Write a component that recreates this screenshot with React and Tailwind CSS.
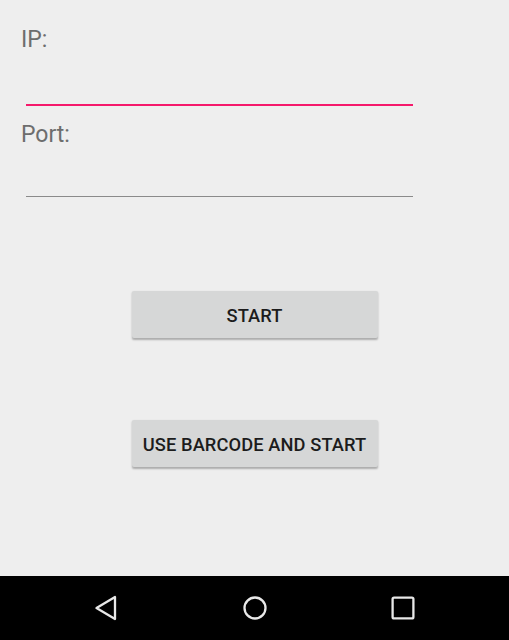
export default function App() {
  return (
    <div className="w-[509px] h-[640px] flex flex-col bg-[#eeeeee] font-['Roboto',sans-serif]">
      <div className="flex-1 flex flex-col">
        <div className="pl-[21px] pr-[96px] pt-[26px]">
          <div className="text-[23px] leading-[28px] text-[#6d6d6d]">IP:</div>
          <div className="ml-[5px] mt-[50px] h-[2px] bg-[#f5196b]" />
          <div className="mt-[15px] text-[23px] leading-[28px] text-[#6d6d6d]">Port:</div>
          <div className="ml-[5px] mt-[47px] h-px bg-[#8a8a8a]" />
        </div>

        <div className="flex flex-col items-center mt-[94px] gap-[82px]">
          <button className="w-[246px] h-[47px] pt-[2px] rounded-[2px] bg-[#d6d7d7] shadow-[0_1.5px_2px_rgba(0,0,0,0.28)] text-[18.3px] font-medium text-[#1c1c1c] tracking-[0.1px]">
            START
          </button>
          <button className="w-[246px] h-[47px] pt-[2px] rounded-[2px] bg-[#d6d7d7] shadow-[0_1.5px_2px_rgba(0,0,0,0.28)] text-[18.3px] font-medium text-[#1c1c1c] tracking-[0.1px]">
            USE BARCODE AND START
          </button>
        </div>
      </div>

      <nav className="h-[64px] bg-black flex items-center justify-between px-[93px]">
        <svg width="26" height="26" viewBox="0 0 26 26">
          <path d="M22 2 L22 24 L3.5 13 Z" fill="none" stroke="#e8e8e8" strokeWidth="2.3" strokeLinejoin="round" />
        </svg>
        <svg width="26" height="26" viewBox="0 0 26 26">
          <circle cx="13" cy="13" r="10.5" fill="none" stroke="#e8e8e8" strokeWidth="2.3" />
        </svg>
        <svg width="26" height="26" viewBox="0 0 26 26">
          <rect x="2.6" y="2.6" width="20.8" height="20.8" rx="1.5" fill="none" stroke="#e8e8e8" strokeWidth="2.3" />
        </svg>
      </nav>
    </div>
  )
}
